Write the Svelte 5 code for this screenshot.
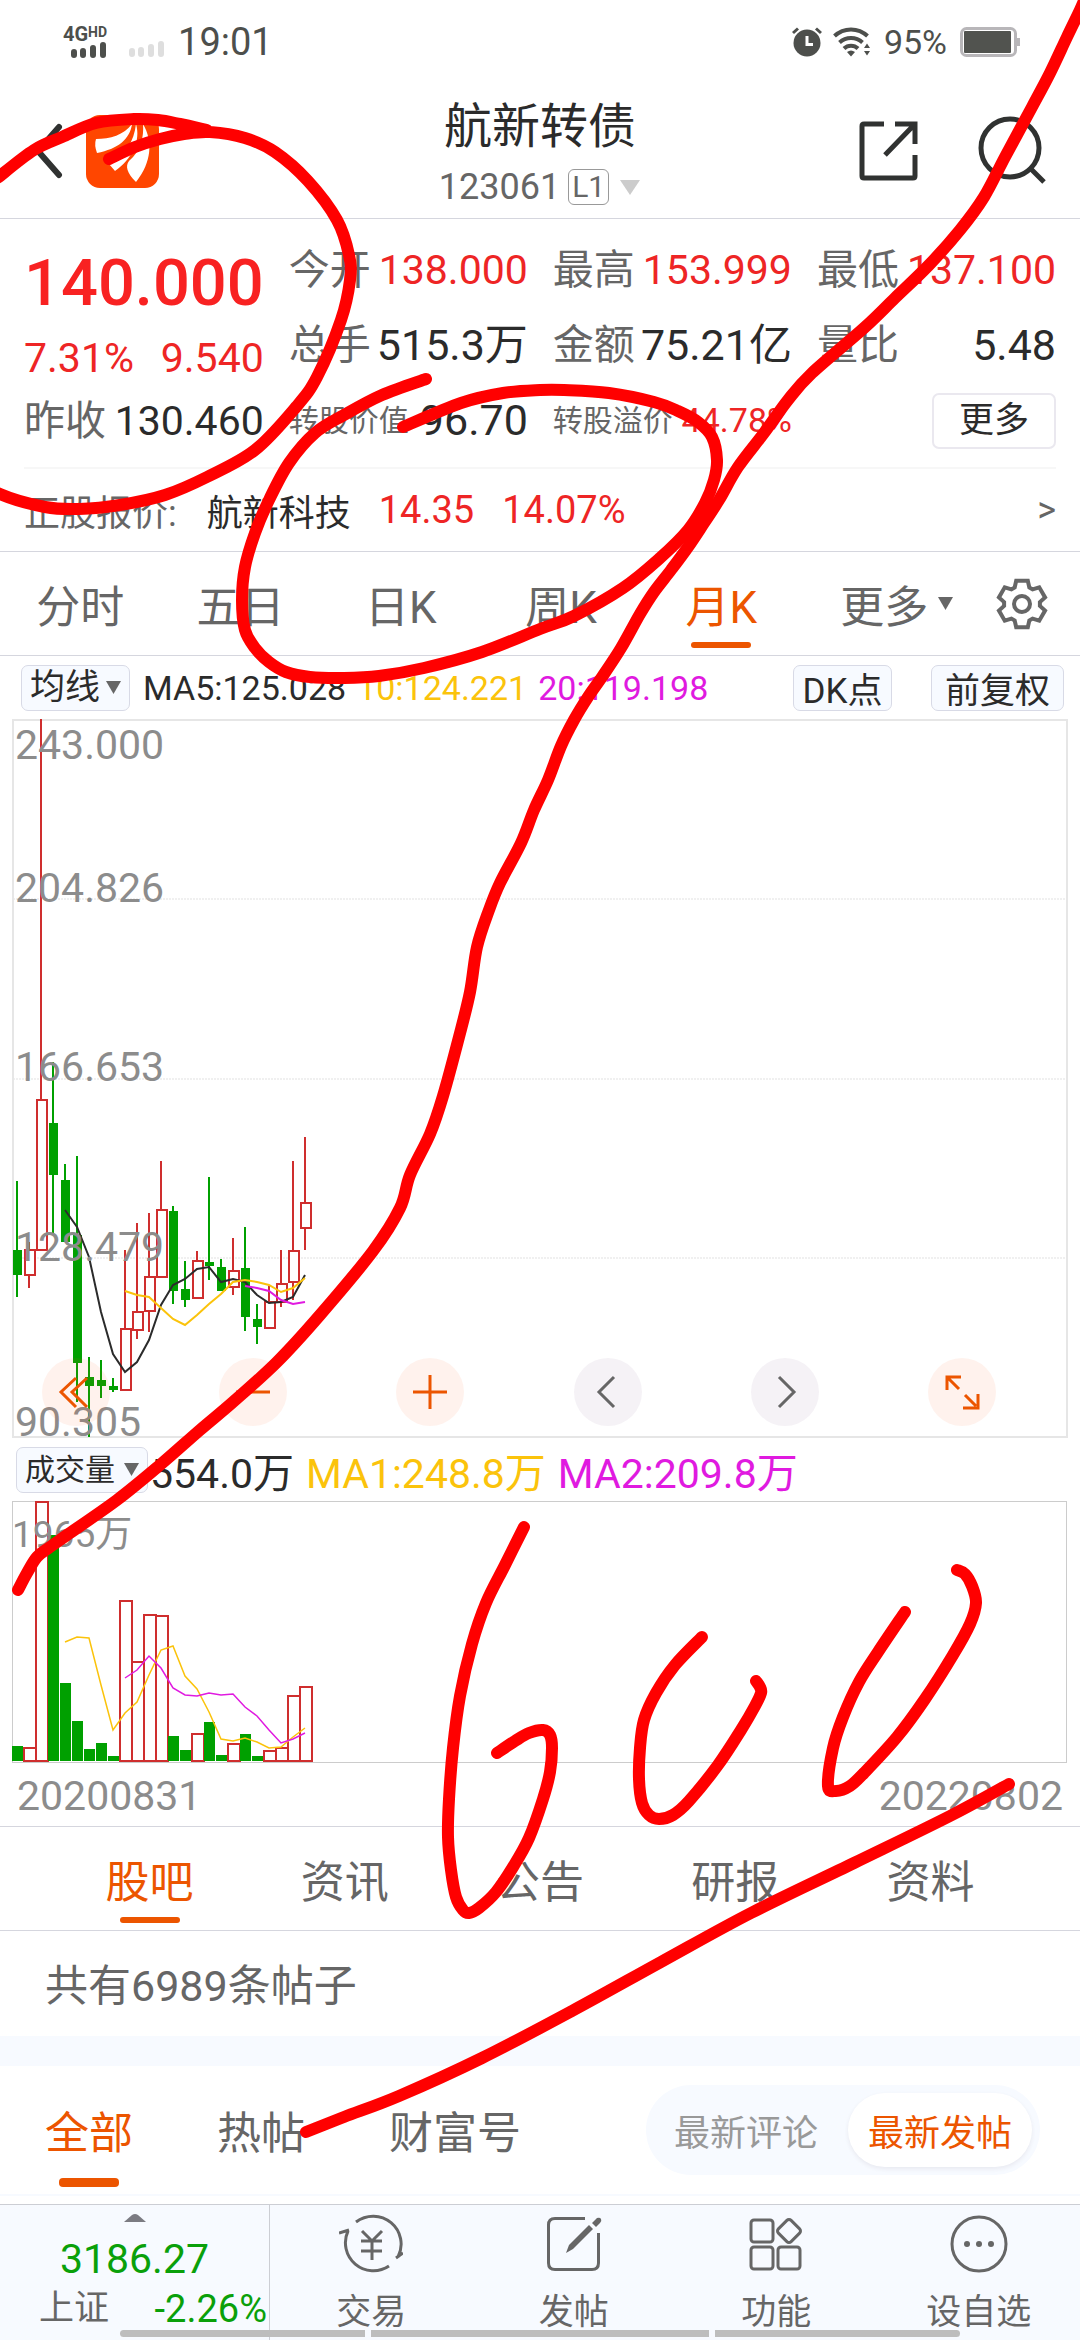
<!--
  个股行情页
  包含报价、月K图、成交量图、股吧列表头和底部导航
  最上层是手写批注
-->

<script lang="ts">
	type Point = [number, number];

	/** 报价明细 */
	const stats = [
		{ label: '今开', value: '138.000', up: true },
		{ label: '最高', value: '153.999', up: true },
		{ label: '最低', value: '137.100', up: true },
		{ label: '总手', value: '515.3万' },
		{ label: '金额', value: '75.21亿' },
		{ label: '量比', value: '5.48' },
		{ label: '转股价值', value: '96.70', small: true },
		{ label: '转股溢价', value: '44.78%', small: true, up: true, smallValue: true }
	];

	const periods = ['分时', '五日', '日K', '周K', '月K'];
	const sections = ['股吧', '资讯', '公告', '研报', '资料'];
	const feeds = ['全部', '热帖', '财富号'];
	const sorts = ['最新评论', '最新发帖'];

	let period = $state('月K');
	let section = $state('股吧');
	let feed = $state('全部');
	let sort = $state('最新发帖');

	/** K线: [涨, 最高, 实体上沿, 实体下沿, 最低, 成交量柱顶] */
	const candles: [number, number, number, number, number, number][] = [
		[0, 1181, 1250, 1275, 1297, 1746],
		[1, 1242, 1250, 1275, 1288, 1748],
		[1, 719, 1100, 1250, 1250, 1502],
		[0, 1062, 1123, 1175, 1235, 1535],
		[0, 1164, 1180, 1242, 1242, 1683],
		[0, 1156, 1235, 1363, 1402, 1721],
		[0, 1357, 1377, 1386, 1437, 1749],
		[0, 1360, 1380, 1386, 1398, 1743],
		[0, 1378, 1386, 1390, 1392, 1756],
		[1, 1250, 1329, 1390, 1390, 1601],
		[1, 1223, 1312, 1330, 1339, 1662],
		[1, 1213, 1277, 1311, 1332, 1615],
		[1, 1161, 1210, 1277, 1277, 1616],
		[0, 1206, 1211, 1291, 1304, 1736],
		[0, 1261, 1289, 1300, 1307, 1750],
		[1, 1251, 1261, 1298, 1298, 1734],
		[0, 1177, 1262, 1266, 1280, 1722],
		[0, 1259, 1267, 1291, 1291, 1755],
		[1, 1238, 1271, 1287, 1295, 1744],
		[0, 1227, 1268, 1317, 1331, 1734],
		[0, 1304, 1319, 1327, 1344, 1756],
		[1, 1286, 1302, 1328, 1328, 1751],
		[1, 1250, 1284, 1302, 1307, 1748],
		[1, 1161, 1251, 1282, 1300, 1696],
		[1, 1137, 1203, 1228, 1250, 1687]
	];

	const ma5 = [1210, 1227, 1257, 1312, 1354, 1372, 1362, 1340, 1305, 1285, 1279, 1269, 1267, 1282, 1279, 1282, 1295, 1303, 1302, 1297, 1275];
	const ma10 = [1291, 1295, 1297, 1308, 1319, 1325, 1315, 1304, 1294, 1282, 1280, 1282, 1285, 1292, 1288, 1278];
	const ma20 = [1286, 1288, 1291, 1300, 1304, 1302];
	const vol1 = [1642, 1637, 1638, 1685, 1730, 1713, 1702, 1675, 1650, 1646, 1676, 1689, 1712, 1739, 1741, 1738, 1742, 1748, 1747, 1737, 1728];
	const vol2 = [1678, 1670, 1656, 1668, 1688, 1695, 1696, 1693, 1695, 1694, 1707, 1716, 1730, 1743, 1739, 1733];

	const priceLabels = [
		{ text: '243.000', y: 759 },
		{ text: '204.826', y: 902 },
		{ text: '166.653', y: 1081 },
		{ text: '128.479', y: 1261 },
		{ text: '90.305', y: 1436 }
	];

	/** 批注笔迹 */
	const strokes: Point[][] = [
		[[109, 159], [135, 147], [160, 139], [184, 134], [210, 132], [245, 138], [275, 152], [308, 181], [337, 220], [349, 255], [350, 280], [341, 320], [317, 377], [296, 407], [255, 450], [207, 477], [165, 495], [120, 505], [79, 509], [45, 507], [0, 494], [-40, 470], [-60, 330], [-40, 210], [0, 176], [34, 150], [62, 137], [96, 123], [134, 119], [158, 120], [180, 124], [207, 130]],
		[[426, 379], [382, 395], [344, 415], [315, 433], [289, 463], [269, 500], [255, 533], [245, 567], [242, 600], [245, 630], [255, 648], [269, 662], [286, 672], [310, 677], [344, 678], [379, 676], [424, 668], [482, 652], [540, 629], [574, 616], [623, 588], [660, 558], [688, 530], [705, 503], [714, 480], [717, 460], [712, 437], [698, 422], [678, 411], [654, 402], [609, 393], [564, 390], [540, 390], [503, 393], [461, 403], [403, 427]],
		[[1086, -4], [1080, 10], [1067, 37], [1050, 73], [1032, 107], [1005, 157], [984, 197], [960, 230], [929, 265], [895, 298], [864, 328], [812, 373], [788, 400], [764, 433], [738, 467], [719, 500], [704, 523], [688, 547], [671, 570], [654, 592], [640, 614], [621, 648], [602, 677], [588, 697], [574, 720], [561, 746], [548, 780], [534, 810], [521, 843], [500, 883], [489, 910], [477, 947], [470, 992], [459, 1037], [443, 1096], [430, 1134], [410, 1175], [400, 1208], [373, 1251], [320, 1315], [277, 1362], [233, 1402], [200, 1430], [160, 1465], [117, 1500], [67, 1535], [50, 1547], [37, 1557], [27, 1573], [18, 1590]],
		[[524, 1527], [505, 1565], [486, 1603], [472, 1644], [460, 1696], [453, 1748], [449, 1799], [448, 1837], [451, 1870], [456, 1897], [463, 1910], [469, 1913], [479, 1908], [496, 1892], [513, 1867], [529, 1838], [543, 1799], [550, 1772], [552, 1748], [550, 1735], [543, 1730], [529, 1733], [515, 1741], [497, 1753]],
		[[702, 1637], [675, 1665], [656, 1693], [644, 1720], [640, 1748], [639, 1779], [642, 1803], [649, 1815], [659, 1819], [673, 1815], [689, 1801], [718, 1765], [741, 1730], [755, 1706], [761, 1693], [760, 1687], [756, 1681]],
		[[905, 1612], [878, 1652], [859, 1682], [843, 1717], [833, 1748], [828, 1786], [836, 1791], [850, 1786], [864, 1773], [897, 1737], [925, 1699], [953, 1655], [970, 1624], [976, 1603], [972, 1586], [965, 1574], [957, 1570]],
		[[1009, 1784], [950, 1816], [854, 1863], [751, 1913], [661, 1962], [572, 2011], [482, 2058], [399, 2096], [344, 2117], [306, 2132]]
	];

	const candleX = (i: number) => 17 + i * 12;

	/** 均线折线，起点为第 start 根 */
	const line = (values: number[], start: number) =>
		values.map((y, i) => `${candleX(start + i)},${y}`).join(' ');

	/** 用三次贝塞尔平滑连接各点 */
	function smooth(points: Point[]) {
		let d = `M${points[0]}`;
		for (let i = 0; i < points.length - 1; i++) {
			const a = points[i - 1] ?? points[i];
			const b = points[i];
			const c = points[i + 1];
			const e = points[i + 2] ?? c;
			d += `C${b[0] + (c[0] - a[0]) / 6} ${b[1] + (c[1] - a[1]) / 6} ${c[0] - (e[0] - b[0]) / 6} ${c[1] - (e[1] - b[1]) / 6} ${c[0]} ${c[1]}`;
		}
		return d;
	}

	/** 六齿齿轮轮廓 */
	const gear = [0, 1, 2, 3, 4, 5]
		.flatMap((k) =>
			[[-24, 18], [-14, 24], [14, 24], [24, 18]].map(([angle, r]) => {
				const t = ((k * 60 + angle) * Math.PI) / 180;
				return `${26 + r * Math.sin(t)},${26 - r * Math.cos(t)}`;
			})
		)
		.join(' ');
</script>

{#snippet arrow()}
	<svg class="arrow" viewBox="0 0 15 13" aria-hidden="true"><path d="M0 0H15L7.500 13Z" /></svg>
{/snippet}

<div class="page">
	<!-- 状态栏 -->
	<div class="status">
		<div class="network">
			<span class="net-type">4G<sup>HD</sup></span>
			<svg class="bars" viewBox="0 0 36 16"><path d="M3 10V13M12 9V13M22 6V13M32 3V13" /></svg>
		</div>
		<svg class="bars empty" viewBox="0 0 36 16"><path d="M3 10V13M12 9V13M22 6V13M32 3V13" /></svg>
		<span class="clock">19:01</span>
		<svg class="alarm" viewBox="0 0 30 30">
			<circle cx="15" cy="16" r="13.500" />
			<path class="bell" d="M1 6L6 1.500M29 6L24 1.500" />
			<path class="hand" d="M15 9V17.500H21" />
		</svg>
		<svg class="wifi" viewBox="0 0 38 30">
			<path class="wave" d="M1.500 9A24 24 0 0 1 34.500 9M6.500 15.500A17 17 0 0 1 29.500 15.500M11 21.500A10 10 0 0 1 25 21.500" />
			<path d="M14 25Q18 22 22 25L18 29.500ZM31 21L34 16.500L37 21ZM31 24H37L34 28.500Z" />
		</svg>
		<span class="percent">95%</span>
		<svg class="battery" viewBox="0 0 60 30">
			<rect class="shell" x="1.500" y="1.500" width="54" height="27" rx="5" />
			<rect class="charge" x="4" y="4" width="47" height="22" rx="1" />
			<path class="shell" d="M58.500 11V19" />
		</svg>
	</div>

	<!-- 标题 -->
	<header>
		<div class="head-left">
			<button aria-label="返回">
				<svg class="back" viewBox="0 0 28 56"><path d="M24 4L3 28L24 52" /></svg>
			</button>
			<svg class="logo" viewBox="0 0 73 73" aria-hidden="true">
				<rect width="73" height="73" rx="14" fill="#ff4600" />
				<g fill="#fff">
					<path d="M10 24C24 24 38 20 46 9C44 24 32 34 11 38Q8 30 10 24Z" />
					<path d="M50 9C55 26 46 44 29 56L23 49C40 40 48 26 50 9Z" />
					<path d="M57 9C67 26 66 47 50 67C41 58 39 51 43 46C55 36 58 22 57 9Z" />
				</g>
			</svg>
		</div>
		<div class="title">
			<h1>航新转债</h1>
			<button class="code">123061<span class="level">L1</span><svg viewBox="0 0 22 15" aria-hidden="true"><path d="M1 0H21L11 15Z" /></svg></button>
		</div>
		<div class="head-right">
			<button aria-label="分享">
				<svg class="share" viewBox="0 0 60 60">
					<path d="M25 3H5Q3 3 3 5V55Q3 57 5 57H54Q56 57 56 55V34M36 3H56V23M55 4L26 34" />
				</svg>
			</button>
			<button aria-label="搜索">
				<svg class="search" viewBox="0 0 70 70">
					<circle cx="32" cy="32" r="29" />
					<path d="M52 52L66 66" />
				</svg>
			</button>
		</div>
	</header>

	<!-- 报价 -->
	<section class="quote">
		<div class="main-quote">
			<strong class="up">140.000</strong>
			<div class="change up"><span>7.31%</span><span>9.540</span></div>
			<div class="pair prev"><span>昨收</span><b>130.460</b></div>
		</div>
		<dl class="stats">
			{#each stats as item}
				<div class="pair" class:small={item.small}>
					<dt>{item.label}</dt>
					<dd class:up={item.up} class:small-value={item.smallValue}>{item.value}</dd>
				</div>
			{/each}
			<button class="more">更多</button>
		</dl>
	</section>
	<a class="related" href="#stock">
		<span class="name">正股报价:</span>
		<span class="stock">航新科技</span>
		<span class="up">14.35</span>
		<span class="up">14.07%</span>
		<span class="go">&gt;</span>
	</a>

	<!-- 周期切换 -->
	<nav class="periods">
		{#each periods as item}
			<button class="tab" class:active={period === item} onclick={() => (period = item)}>{item}</button>
		{/each}
		<button class="tab">更多{@render arrow()}</button>
		<button class="gear" aria-label="设置">
			<svg viewBox="0 0 52 52">
				<polygon points={gear} />
				<circle cx="26" cy="26" r="8" />
			</svg>
		</button>
	</nav>

	<!-- K线图 -->
	<div class="legend">
		<label class="pill pick">
			<select aria-label="主图指标"><option>均线</option></select>
			{@render arrow()}
		</label>
		<span class="ma">MA5:125.028</span>
		<span class="ma yellow">10:124.221</span>
		<span class="ma magenta">20:119.198</span>
		<button class="pill dk">DK点</button>
		<button class="pill adjust">前复权</button>
	</div>
	<div class="chart">
		<svg viewBox="12 719 1056 719">
			<path class="dots" d="M13 899H1067M13 1079H1067M13 1258H1067" />
			<rect class="frame" x="13" y="720" width="1054" height="717" />
			{#each candles as [up, high, top, bottom, low], i}
				{#if up}
					<path class="rise" d="M{candleX(i)} {high}V{top}M{candleX(i)} {bottom}V{low}" />
					<rect class="rise" x={candleX(i) - 4} y={top} width="10" height={bottom - top} />
				{:else}
					<path class="fall" d="M{candleX(i)} {high}V{low}" />
					<rect class="fall-body" x={candleX(i) - 4} y={top} width="9" height={bottom - top} />
				{/if}
			{/each}
			<polyline class="line dark" points={line(ma5, 4)} />
			<polyline class="line yellow" points={line(ma10, 9)} />
			<polyline class="line magenta" points={line(ma20, 19)} />
			{#each priceLabels as label}
				<text x="15" y={label.y}>{label.text}</text>
			{/each}
		</svg>
		<div class="controls">
			<button aria-label="最早"><svg viewBox="0 0 68 68"><path d="M34 20L19 34L34 49M45 20L30 34L45 49" /></svg></button>
			<button aria-label="缩小"><svg viewBox="0 0 68 68"><path d="M17 34H51" /></svg></button>
			<button aria-label="放大"><svg viewBox="0 0 68 68"><path d="M17 34H51M34 17V51" /></svg></button>
			<button class="gray" aria-label="左移"><svg viewBox="0 0 68 68"><path d="M40 19L25 34L40 49" /></svg></button>
			<button class="gray" aria-label="右移"><svg viewBox="0 0 68 68"><path d="M28 19L43 34L28 49" /></svg></button>
			<button aria-label="全屏"><svg viewBox="0 0 68 68"><path d="M19 32V19H33M20 20L31 31M37 37L48 48M50 36V50H35" /></svg></button>
		</div>
	</div>

	<!-- 成交量 -->
	<div class="legend volume-legend">
		<label class="pill pick volume-pick">
			<select aria-label="副图指标"><option>成交量</option></select>
			{@render arrow()}
		</label>
		<span>554.0万</span>
		<span class="yellow">MA1:248.8万</span>
		<span class="magenta">MA2:209.8万</span>
	</div>
	<div class="chart">
		<svg viewBox="12 1501 1056 262">
			<rect class="frame strong" x="12.500" y="1501.500" width="1054" height="261" />
			{#each candles as [up, , , , , top], i}
				{#if up}
					<rect class="rise" x={candleX(i) - 5} y={top} width="12" height={1761 - top} />
				{:else}
					<rect class="fall-body" x={candleX(i) - 5} y={top} width="11" height={1761 - top} />
				{/if}
			{/each}
			<polyline class="line thin yellow" points={line(vol1, 4)} />
			<polyline class="line thin magenta" points={line(vol2, 9)} />
			<text class="volume-text" x="12" y="1547">1965万</text>
		</svg>
	</div>
	<div class="dates"><span>20200831</span><span>20220802</span></div>

	<!-- 资讯栏目 -->
	<nav class="sections">
		{#each sections as item}
			<button class="tab" class:active={section === item} onclick={() => (section = item)}>{item}</button>
		{/each}
	</nav>
	<p class="count">共有6989条帖子</p>
	<div class="feed">
		{#each feeds as item}
			<button class="tab" class:active={feed === item} onclick={() => (feed = item)}>{item}</button>
		{/each}
		<div class="sort">
			{#each sorts as item}
				<button class:active={sort === item} onclick={() => (sort = item)}>{item}</button>
			{/each}
		</div>
	</div>

	<!-- 底部导航 -->
	<footer>
		<button class="index">
			<svg viewBox="0 0 22 8" aria-hidden="true"><path d="M0 8L8 1Q11 -1 14 1L22 8Z" /></svg>
			<span class="points">3186.27</span>
			<span class="index-row"><span class="index-name">上证</span><span>-2.26%</span></span>
		</button>
		<button class="action">
			<svg viewBox="0 0 64 64">
				<path d="M17 10A28 28 0 0 1 59 45M57 46L64 41M50 54A28 28 0 0 1 9 19M0 21L10 18" />
				<path d="M23 19L33 29L43 19M22 29H43M22 39H43M33 29V48" />
			</svg>
			<span>交易</span>
		</button>
		<button class="action">
			<svg viewBox="0 0 64 64">
				<path d="M43 6.500H13Q6.500 6.500 6.500 13V51Q6.500 57.500 13 57.500H50Q56.500 57.500 56.500 51V21" />
				<path class="solid" d="M24 41L27 33L47 13L51 17L31 37ZM50 11L55 6Q58 5 59 7Q60 9 58 11L54 15Z" />
			</svg>
			<span>发帖</span>
		</button>
		<button class="action">
			<svg viewBox="0 0 64 64">
				<rect x="7" y="8" width="22" height="22" rx="3" />
				<rect x="7" y="35" width="22" height="22" rx="3" />
				<rect x="34" y="35" width="22" height="22" rx="3" />
				<rect x="36" y="10" width="18" height="18" rx="3" transform="rotate(45 45 19)" />
			</svg>
			<span>功能</span>
		</button>
		<button class="action">
			<svg viewBox="0 0 64 64">
				<circle cx="32" cy="32" r="27" />
				<g class="solid"><circle cx="20" cy="32" r="3" /><circle cx="32" cy="32" r="3" /><circle cx="44" cy="32" r="3" /></g>
			</svg>
			<span>设自选</span>
		</button>
		<div class="home"><i></i><i></i><i></i></div>
	</footer>

	<!-- 手写批注 -->
	<svg class="ink" viewBox="0 0 1080 2340" aria-hidden="true">
		{#each strokes as stroke}
			<path d={smooth(stroke)} />
		{/each}
	</svg>
</div>

<style>
	:global(body) {
		margin: 0;
		background: #fff;
	}
	.page {
		position: relative;
		overflow: hidden;
		background: #fff;
		color: #2b2b2b;
		font-family: Roboto, "Noto Sans CJK SC", sans-serif;
		font-size: 41px;
	}
	button {
		appearance: none;
		margin: 0;
		padding: 0;
		border: 0;
		background: none;
		color: inherit;
		font: inherit;
		cursor: pointer;
	}
	svg {
		display: block;
		flex: none;
		fill: none;
	}
	.up {
		color: #ee2525;
	}
	.yellow {
		color: #fbc30b;
	}
	.magenta {
		color: #e01ae0;
	}
	.arrow {
		width: 15px;
		height: 13px;
		fill: #666;
	}

	/** 状态栏 */
	.status {
		display: flex;
		align-items: center;
		height: 84px;
		padding: 0 60px 0 63px;
		color: #4d4f4c;
	}
	.network {
		display: flex;
		flex-direction: column;
		align-items: flex-end;
		margin-right: 22px;
	}
	.net-type {
		font-size: 20px;
		font-weight: 700;
		line-height: 16px;
	}
	.net-type sup {
		font-size: 14px;
		line-height: 10px;
		vertical-align: 4px;
	}
	.bars {
		width: 36px;
		height: 16px;
		stroke: currentColor;
		stroke-width: 6;
		stroke-linecap: round;
	}
	.bars.empty {
		margin-top: 14px;
		color: #dedede;
	}
	.clock {
		margin-left: 13px;
		margin-right: auto;
		font-size: 38px;
	}
	.alarm {
		width: 30px;
		height: 30px;
		fill: currentColor;
	}
	.alarm path {
		fill: none;
		stroke-width: 3;
	}
	.bell {
		stroke: currentColor;
	}
	.hand {
		stroke: #fff;
	}
	.wifi {
		width: 38px;
		height: 30px;
		margin: 0 13px 0 11px;
		fill: currentColor;
	}
	.wave {
		fill: none;
		stroke: currentColor;
		stroke-width: 4;
	}
	.percent {
		margin-right: 13px;
		font-size: 34px;
	}
	.battery {
		width: 60px;
		height: 30px;
	}
	.shell {
		stroke: #b8b6b9;
		stroke-width: 3;
	}
	.charge {
		fill: #51534f;
	}

	/** 标题栏 */
	header {
		display: grid;
		grid-template-columns: 1fr auto 1fr;
		align-items: center;
		height: 134px;
		border-bottom: 1px solid #d5d6de;
	}
	.head-left,
	.head-right {
		display: flex;
		align-items: center;
	}
	.head-left {
		gap: 23px;
		padding-left: 35px;
	}
	.head-right {
		justify-content: flex-end;
		gap: 59px;
		padding-right: 32px;
		stroke: #303231;
		stroke-width: 5;
	}
	.back {
		width: 28px;
		height: 56px;
		stroke: #303231;
		stroke-width: 6;
		stroke-linecap: round;
	}
	.logo {
		width: 73px;
		height: 73px;
	}
	.share {
		width: 60px;
		height: 60px;
	}
	.search {
		width: 70px;
		height: 70px;
	}
	.title {
		display: flex;
		flex-direction: column;
		align-items: center;
		padding-top: 12px;
		line-height: 60px;
	}
	h1 {
		margin: 0;
		font-size: 48px;
		font-weight: 400;
	}
	.code {
		display: flex;
		align-items: center;
		color: #666;
		font-size: 36px;
	}
	.level {
		margin: 0 10px 0 8px;
		padding: 0 3px;
		border: 1px solid #999;
		border-radius: 6px;
		font-size: 30px;
		line-height: 34px;
	}
	.code svg {
		width: 22px;
		height: 15px;
		fill: #ccc;
	}

	/** 报价区 */
	.quote {
		display: grid;
		grid-template-columns: repeat(4, 1fr);
		column-gap: 25px;
		margin: 0 24px;
		padding-bottom: 9px;
		border-bottom: 2px solid #f7f7f7;
	}
	.main-quote {
		padding-top: 26px;
	}
	.main-quote strong {
		display: block;
		color: #f82222;
		font-size: 65px;
		font-weight: 500;
		line-height: 76px;
	}
	.change {
		display: flex;
		justify-content: space-between;
		line-height: 74px;
	}
	.pair {
		display: flex;
		align-items: center;
		justify-content: space-between;
		line-height: 75px;
		white-space: nowrap;
	}
	.pair.prev {
		line-height: 52px;
	}
	.pair.prev b {
		font-weight: 400;
	}
	.pair dt,
	.prev span {
		color: #666;
	}
	.pair dd {
		margin: 0;
		font-size: 43px;
	}
	.pair dd.up {
		font-size: 41px;
	}
	.pair.small dt {
		font-size: 30px;
	}
	.pair dd.small-value {
		font-size: 34px;
	}
	.stats {
		display: grid;
		grid-column: span 3;
		grid-template-columns: subgrid;
		grid-auto-rows: 75px;
		margin: 0;
		padding-top: 14px;
	}
	.more {
		align-self: center;
		justify-self: end;
		box-sizing: border-box;
		width: 124px;
		height: 56px;
		border: 2px solid #eae8ef;
		border-radius: 7px;
		font-size: 35px;
		line-height: 48px;
	}
	.related {
		display: flex;
		align-items: center;
		height: 82px;
		padding: 0 24px;
		border-bottom: 1px solid #d5d6de;
		color: inherit;
		font-size: 36px;
		text-decoration: none;
	}
	.related .name {
		margin-right: 30px;
		color: #666;
	}
	.related .stock {
		margin-right: 28px;
	}
	.related .up {
		margin-right: 28px;
		font-size: 38px;
	}
	.go {
		margin-left: auto;
		color: #666;
	}

	/** 标签 */
	.tab {
		position: relative;
		display: flex;
		align-items: center;
		justify-content: center;
		gap: 10px;
		color: #666;
		font-size: 44px;
	}
	.tab.active {
		color: #ec5500;
	}
	.tab.active::after {
		content: "";
		position: absolute;
		left: 50%;
		bottom: 7px;
		width: 60px;
		height: 6px;
		margin-left: -30px;
		border-radius: 3px;
		background: #ec5500;
	}
	.periods {
		display: grid;
		grid-template-columns: repeat(5, 16fr) 19fr 6fr;
		height: 103px;
		padding-right: 28px;
		border-bottom: 1px solid #d5d6de;
	}
	.gear {
		display: flex;
		align-items: center;
		justify-content: center;
	}
	.gear svg {
		width: 52px;
		height: 52px;
		stroke: #666;
		stroke-width: 4;
	}

	/** 指标栏 */
	.legend {
		display: flex;
		align-items: center;
		height: 63px;
		padding: 0 16px 0 21px;
		white-space: nowrap;
	}
	.pill {
		box-sizing: border-box;
		display: flex;
		align-items: center;
		justify-content: center;
		height: 46px;
		border: 1px solid #d8dae6;
		border-radius: 7px;
		background: #f7faff;
		font-size: 35px;
	}
	.pick {
		gap: 5px;
		width: 109px;
		margin-right: 13px;
	}
	select {
		appearance: none;
		padding: 0;
		border: 0;
		background: none;
		color: inherit;
		font: inherit;
		line-height: 42px;
	}
	.ma {
		margin-right: 11px;
		font-size: 34px;
	}
	.dk {
		width: 99px;
		margin: 0 39px 0 auto;
	}
	.adjust {
		width: 133px;
	}
	.volume-legend {
		gap: 12px;
		padding-left: 16px;
	}
	.volume-pick {
		gap: 9px;
		width: 132px;
		margin-right: -10px;
		font-size: 30px;
	}

	/** 图表 */
	.chart {
		position: relative;
		margin: 0 12px;
	}
	.chart > svg {
		overflow: visible;
		width: 100%;
		height: auto;
	}
	.frame {
		stroke: #e6e6e6;
		stroke-width: 2;
	}
	.frame.strong {
		stroke: #ccc;
		stroke-width: 1;
	}
	.dots {
		stroke: #f0f0f0;
		stroke-width: 2;
		stroke-dasharray: 2 1;
	}
	.chart text {
		fill: #8c8c8c;
		font-size: 41px;
	}
	.chart text.volume-text {
		font-size: 37px;
	}
	.rise {
		stroke: #cf2e2e;
		stroke-width: 2;
	}
	rect.rise {
		fill: #fff;
	}
	.fall {
		stroke: #00a000;
		stroke-width: 2;
	}
	.fall-body {
		fill: #00a000;
	}
	.line {
		stroke: currentColor;
		stroke-width: 2;
	}
	.line.thin {
		stroke-width: 1.5;
	}
	.controls {
		position: absolute;
		right: 72px;
		bottom: 12px;
		left: 30px;
		display: flex;
		justify-content: space-between;
	}
	.controls button {
		width: 68px;
		height: 68px;
		border-radius: 50%;
		background: rgba(255, 85, 20, 0.08);
		color: #ec5500;
	}
	.controls .gray {
		background: rgba(90, 40, 110, 0.06);
		color: #666;
	}
	.controls svg {
		width: 68px;
		height: 68px;
		stroke: currentColor;
		stroke-width: 3;
	}
	.dates {
		display: flex;
		justify-content: space-between;
		height: 63px;
		padding: 0 17px;
		border-bottom: 1px solid #d5d6de;
		color: #8c8c8c;
		line-height: 67px;
	}

	/** 股吧 */
	.sections {
		display: grid;
		grid-template-columns: repeat(5, 1fr);
		height: 103px;
		padding: 0 52px;
		border-bottom: 1px solid #d5d6de;
	}
	.count {
		height: 105px;
		margin: 0;
		padding: 0 45px;
		border-bottom: 30px solid #f7faff;
		color: #666;
		font-size: 43px;
		line-height: 111px;
	}
	.feed {
		display: flex;
		gap: 84px;
		height: 128px;
		padding: 0 40px 0 45px;
		border-bottom: 2px solid #f7faff;
	}
	.feed .tab.active::after {
		height: 9px;
		border-radius: 4px;
	}
	.sort {
		display: flex;
		align-self: center;
		gap: 10px;
		box-sizing: border-box;
		height: 90px;
		margin-left: auto;
		padding: 8px;
		border-radius: 45px;
		background: #f7faff;
	}
	.sort button {
		padding: 0 20px;
		border-radius: 37px;
		color: #999;
		font-size: 36px;
	}
	.sort .active {
		background: #fff;
		box-shadow: 0 2px 4px rgba(60, 40, 60, 0.08);
		color: #ec5500;
	}

	/** 底部导航 */
	footer {
		position: relative;
		display: grid;
		grid-template-columns: 25% repeat(4, 1fr);
		height: 135px;
		margin-top: 8px;
		border-top: 1px solid #ccced4;
		background: #f7faff;
		color: #666;
	}
	.index {
		display: flex;
		flex-direction: column;
		align-items: center;
		padding-top: 9px;
		border-right: 1px solid #ccced4;
		color: #0aa00a;
	}
	.index svg {
		width: 22px;
		height: 8px;
		margin-bottom: 13px;
		fill: #7b7b82;
	}
	.points {
		line-height: 48px;
	}
	.index-row {
		display: flex;
		align-self: stretch;
		justify-content: space-between;
		padding: 0 2px 0 39px;
		font-size: 38px;
		line-height: 52px;
	}
	.index-name {
		color: #666;
		font-size: 35px;
	}
	.action {
		display: flex;
		flex-direction: column;
		align-items: center;
		padding-top: 7px;
		font-size: 35px;
		line-height: 50px;
	}
	.action svg {
		width: 64px;
		height: 64px;
		margin-bottom: 12px;
		stroke: #666;
		stroke-width: 3;
	}
	.action .solid {
		fill: #666;
		stroke: none;
	}
	.home {
		position: absolute;
		right: 120px;
		bottom: 3px;
		left: 120px;
		display: flex;
		gap: 6px;
	}
	.home i {
		flex: 245;
		height: 7px;
		background: #bdbdbd;
	}
	.home i:nth-child(2) {
		flex: 338;
	}
	.home i:first-child {
		border-radius: 4px 0 0 4px;
	}
	.home i:last-child {
		border-radius: 0 4px 4px 0;
	}

	/** 批注层 */
	.ink {
		position: absolute;
		top: 0;
		left: 0;
		width: 100%;
		pointer-events: none;
		stroke: #f00;
		stroke-width: 12;
		stroke-linecap: round;
		stroke-linejoin: round;
	}
</style>
